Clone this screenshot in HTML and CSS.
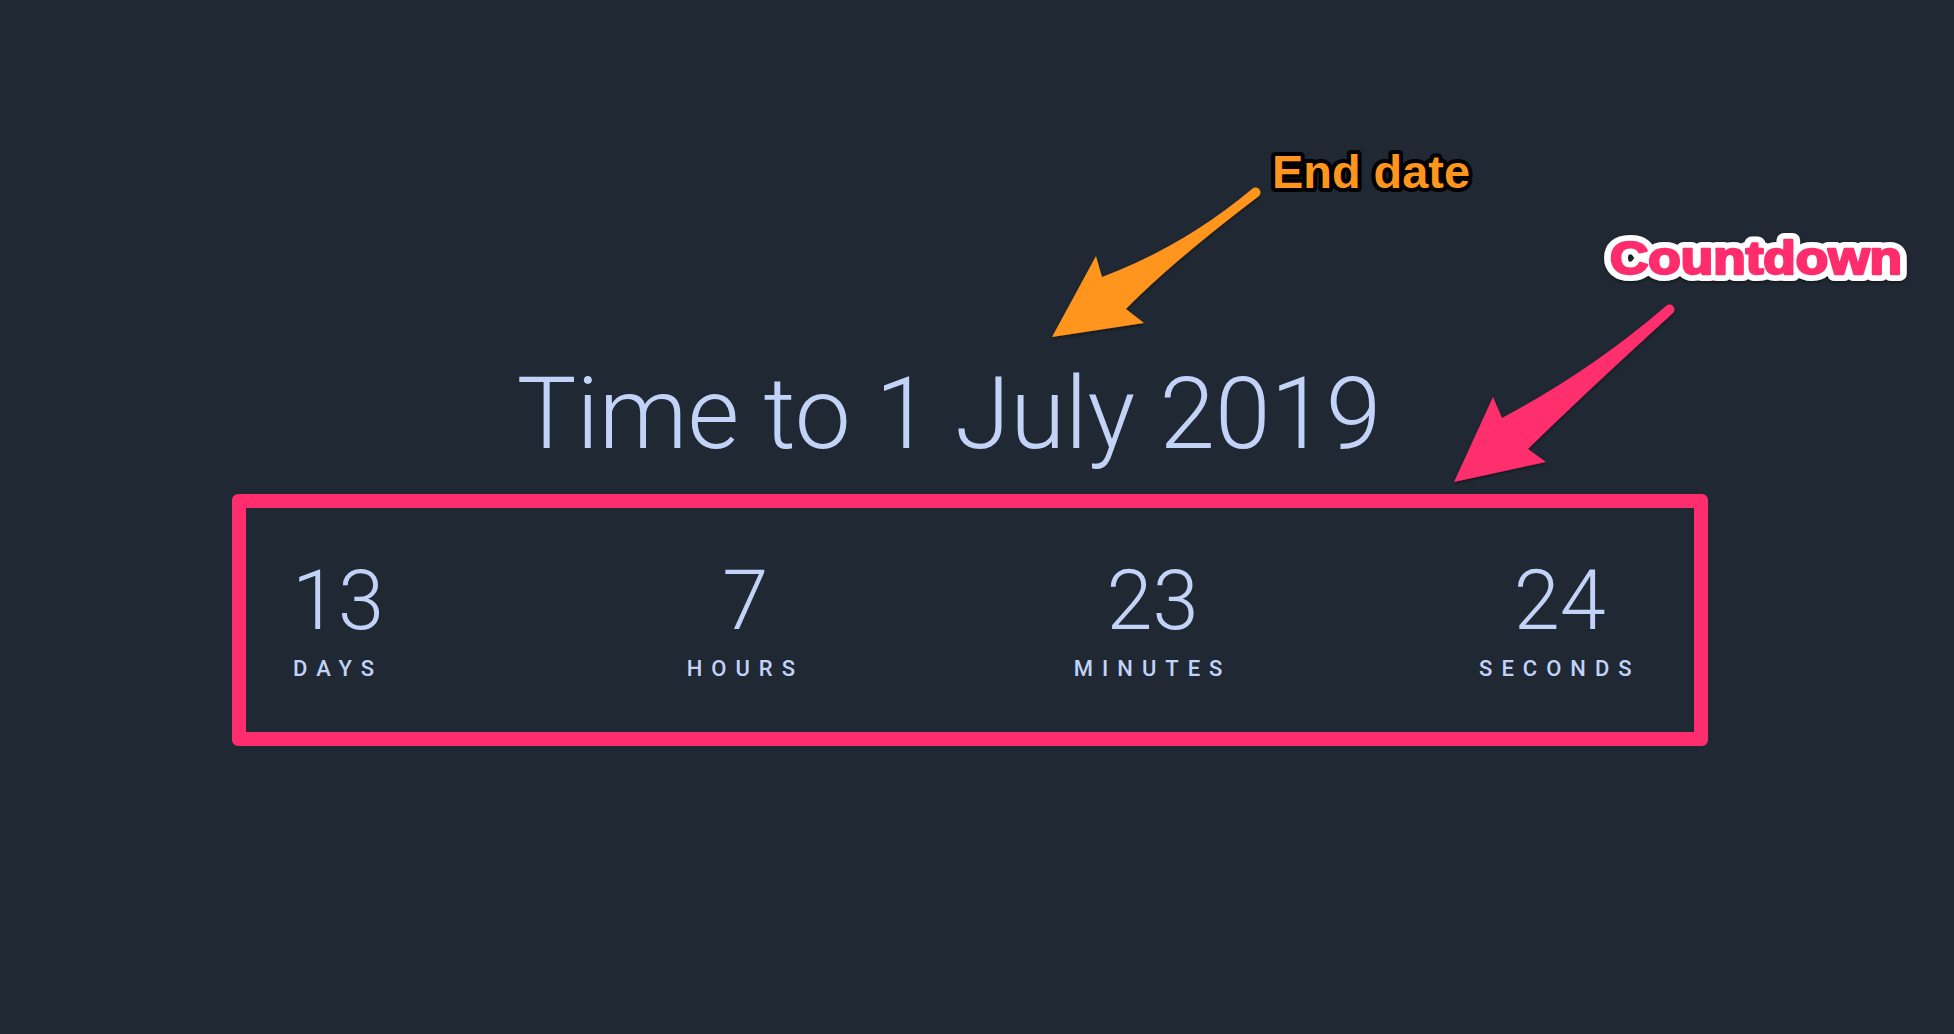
FILE: index.html
```html
<!DOCTYPE html>
<html lang="en">
<head>
<meta charset="utf-8">
<title>Countdown</title>
<link rel="stylesheet" href="styles.css">
</head>
<body>
<main class="page">
  <h1 class="title">Time to 1 July 2019</h1>
  <div class="countdown">
    <div class="unit"><span class="value">13</span><span class="label">Days</span></div>
    <div class="unit"><span class="value">7</span><span class="label">Hours</span></div>
    <div class="unit"><span class="value">23</span><span class="label">Minutes</span></div>
    <div class="unit"><span class="value">24</span><span class="label">Seconds</span></div>
  </div>
</main>

<div class="annotations">
  <div class="highlight-box"></div>
  <svg class="marks" width="1954" height="1034" viewBox="0 0 1954 1034" xmlns="http://www.w3.org/2000/svg">
    <defs>
      <filter id="shadow" x="-20%" y="-20%" width="140%" height="140%">
        <feDropShadow dx="0" dy="1.5" stdDeviation="1.5" flood-color="#000" flood-opacity="0.45"/>
      </filter>
    </defs>
    <path class="arrow-orange" filter="url(#shadow)"
      d="M1052,337 L1096,256 L1102,277 Q1184,246 1252,189 A4.5,4.5 0 0 1 1259,196 Q1172,262 1126,309 L1144,323 Z"/>
    <path class="arrow-pink" filter="url(#shadow)"
      d="M1454,482 L1493,397 L1502,418 Q1592,370 1666,306 A4.5,4.5 0 0 1 1673,313 Q1582,396 1528,449 L1546,462 Z"/>
    <text class="note note-end" x="1272" y="188" textLength="198" lengthAdjust="spacingAndGlyphs">End date</text>
    <text class="note note-count-outline" x="1610" y="274" textLength="292" lengthAdjust="spacingAndGlyphs" filter="url(#shadow)">Countdown</text>
    <text class="note note-count" x="1610" y="274" textLength="292" lengthAdjust="spacingAndGlyphs">Countdown</text>
  </svg>
</div>
</body>
</html>
```

FILE: styles.css
```css
html, body {
  margin: 0;
  padding: 0;
}

body {
  width: 1954px;
  height: 1034px;
  background: #1f2833;
  color: #c2d3f7;
  font-family: Roboto, "Liberation Sans", sans-serif;
  position: relative;
  overflow: hidden;
}

.page {
  padding: 364px 56px 0 0;
  display: flex;
  flex-direction: column;
  align-items: center;
}

.title {
  margin: 0;
  font-size: 100px;
  line-height: 1;
  font-weight: 300;
  letter-spacing: 0;
}

.countdown {
  margin-top: 95px;
  width: 1629px;
  display: grid;
  grid-template-columns: repeat(4, 1fr);
}

.unit {
  display: flex;
  flex-direction: column;
  align-items: center;
}

.value {
  font-size: 83px;
  line-height: 1;
  font-weight: 300;
}

.label {
  margin-top: 16px;
  font-size: 22px;
  line-height: 1;
  font-weight: 500;
  text-transform: uppercase;
  letter-spacing: 9px;
}

/* annotation overlay */
.annotations {
  position: absolute;
  inset: 0;
  pointer-events: none;
}

.highlight-box {
  position: absolute;
  left: 232px;
  top: 494px;
  width: 1476px;
  height: 252px;
  box-sizing: border-box;
  border: 14px solid #ff2d6d;
  border-radius: 6px;
}

.marks {
  position: absolute;
  left: 0;
  top: 0;
}

.arrow-orange {
  fill: #ff951c;
}

.arrow-pink {
  fill: #ff2d6d;
}

.note {
  font-family: "Liberation Sans", Arial, sans-serif;
  font-weight: 700;
}

.note-end {
  font-size: 46px;
  fill: #ff951c;
  stroke: #000;
  stroke-width: 8px;
  stroke-linejoin: round;
  paint-order: stroke fill;
}

.note-count-outline {
  font-size: 46px;
  fill: #fff;
  stroke: #fff;
  stroke-width: 14px;
  stroke-linejoin: round;
}

.note-count {
  font-size: 46px;
  fill: #ff2d6d;
  stroke: #ff2d6d;
  stroke-width: 2.5px;
  stroke-linejoin: round;
}
```
